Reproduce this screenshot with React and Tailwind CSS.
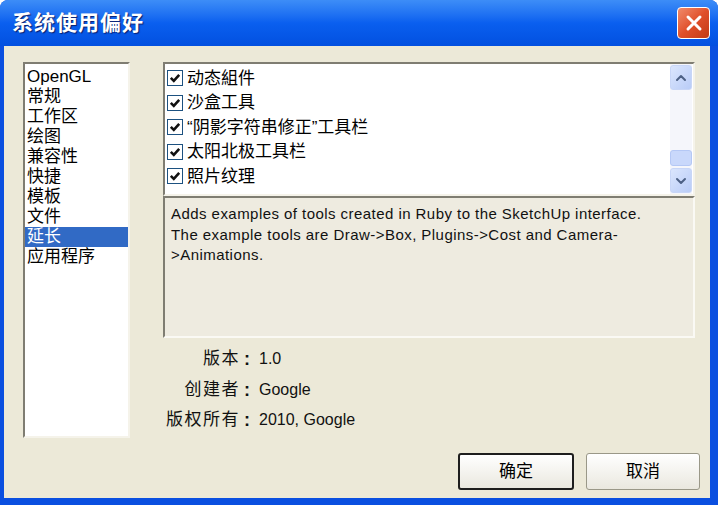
import { ChevronUp, ChevronDown } from 'lucide-react';

const cjk = { fontFamily: '"Liberation Sans", "Noto Sans CJK SC", sans-serif' };

const categories = ['OpenGL', '常规', '工作区', '绘图', '兼容性', '快捷', '模板', '文件', '延长', '应用程序'];
const extensions = ['动态組件', '沙盒工具', '“阴影字符串修正”工具栏', '太阳北极工具栏', '照片纹理'];

function Checkbox() {
  return (
    <span className="w-[16px] h-[16px] border border-[#1c5180] bg-white flex items-center justify-center shrink-0">
      <svg width="12" height="12" viewBox="0 0 12 12">
        <path d="M1.8 5.8 L4.8 8.8 L10.2 2.8" fill="none" stroke="#111" strokeWidth="2.6" />
      </svg>
    </span>
  );
}

function ScrollBtn({ children }) {
  return (
    <div className="w-[22px] h-[25px] rounded-[3px] bg-gradient-to-br from-[#dbe6fd] to-[#b9ccf7] border border-[#c8d6f7] flex items-center justify-center text-[#4d6185]">
      {children}
    </div>
  );
}

export default function App() {
  return (
    <div className="w-[718px] h-[505px] flex flex-col bg-[#0a4fe0] rounded-t-[8px] overflow-hidden" style={cjk}>
      {/* title bar */}
      <div className="h-[46px] flex items-center justify-between pl-[12px] pr-[8px] bg-gradient-to-b from-[#3d8df7] via-[#0a5fef] to-[#0350e0]">
        <span className="text-white font-bold text-[21px] tracking-[1px] [text-shadow:1px_1px_1px_#0a1f6e]">系统使用偏好</span>
        <div className="w-[33px] h-[32px] rounded-[4px] border border-white bg-gradient-to-br from-[#f08a6a] via-[#e0502a] to-[#c23a14] flex items-center justify-center">
          <svg width="20" height="20" viewBox="0 0 20 20">
            <path d="M4 4 L16 16 M16 4 L4 16" stroke="white" strokeWidth="3" strokeLinecap="round" />
          </svg>
        </div>
      </div>

      {/* client area */}
      <div className="flex-1 ml-[4px] mr-[8px] mb-[7px] bg-[#ece9d8] flex flex-col pt-[16px] pl-[19px] pr-[15px]">
        <div className="flex">
          <div className="w-[107px] h-[376px] bg-white border-2 border-t-[#7f7d72] border-l-[#7f7d72] border-r-[#f5f3ea] border-b-[#f5f3ea] pt-[3px] text-[17px] leading-[20px] text-black">
            {categories.map((c) => (
              <div key={c} className={c === '延长' ? 'bg-[#316ac5] text-white pl-[2px]' : 'pl-[2px]'}>{c}</div>
            ))}
          </div>

          <div className="ml-[33px] w-[532px] flex flex-col">
            <div className="h-[134px] bg-white border-2 border-t-[#7f7d72] border-l-[#7f7d72] border-r-[#f5f3ea] border-b-[#f5f3ea] flex">
              <div className="flex-1 pt-[2px] pl-[2px] text-[17px]">
                {extensions.map((e) => (
                  <div key={e} className="h-[24.5px] flex items-center gap-[4px]">
                    <Checkbox />
                    <span>{e}</span>
                  </div>
                ))}
              </div>
              <div className="w-[22px] mr-[1px] bg-[#f5f6fb] flex flex-col justify-between pt-[1px] pb-[1px]">
                <ScrollBtn><ChevronUp size={16} strokeWidth={3} /></ScrollBtn>
                <div className="flex flex-col gap-[2px]">
                  <div className="h-[16px] rounded-[3px] bg-[#c9d8fb] border border-[#b5c8f5]" />
                  <ScrollBtn><ChevronDown size={16} strokeWidth={3} /></ScrollBtn>
                </div>
              </div>
            </div>

            <div className="h-[142px] bg-[#eeebe0] border-2 border-t-[#7f7d72] border-l-[#7f7d72] border-r-[#faf9f4] border-b-[#faf9f4] pl-[6px] pt-[6px] text-[15px] leading-[20.5px] tracking-[0.45px] text-[#111]">
              <p className="w-[480px]">
                Adds examples of tools created in Ruby to the SketchUp interface. The example tools are Draw-&gt;Box, Plugins-&gt;Cost and Camera-&gt;Animations.
              </p>
            </div>

            <div className="mt-[11px] grid grid-cols-[77px_14px_auto] gap-y-[10.5px] text-[16px] leading-[20px] text-[#111]">
              <span className="text-right text-[17px] tracking-[1.5px]">版本</span><span className="text-center font-bold text-[18px]">:</span><span className="pl-[5px]">1.0</span>
              <span className="text-right text-[17px] tracking-[1.5px]">创建者</span><span className="text-center font-bold text-[18px]">:</span><span className="pl-[5px]">Google</span>
              <span className="text-right text-[17px] tracking-[1.5px]">版权所有</span><span className="text-center font-bold text-[18px]">:</span><span className="pl-[5px]">2010, Google</span>
            </div>
          </div>
        </div>

        <div className="flex justify-end gap-[12px] mt-[15px] -mr-[5px]">
          <button className="w-[116px] h-[37px] rounded-[3px] border-2 border-[#1e1e1e] bg-gradient-to-b from-white to-[#eae8df] text-[17px]">确定</button>
          <button className="w-[114px] h-[37px] rounded-[3px] border border-[#9a9888] bg-gradient-to-b from-white to-[#eae8df] text-[17px]">取消</button>
        </div>
      </div>
    </div>
  );
}
